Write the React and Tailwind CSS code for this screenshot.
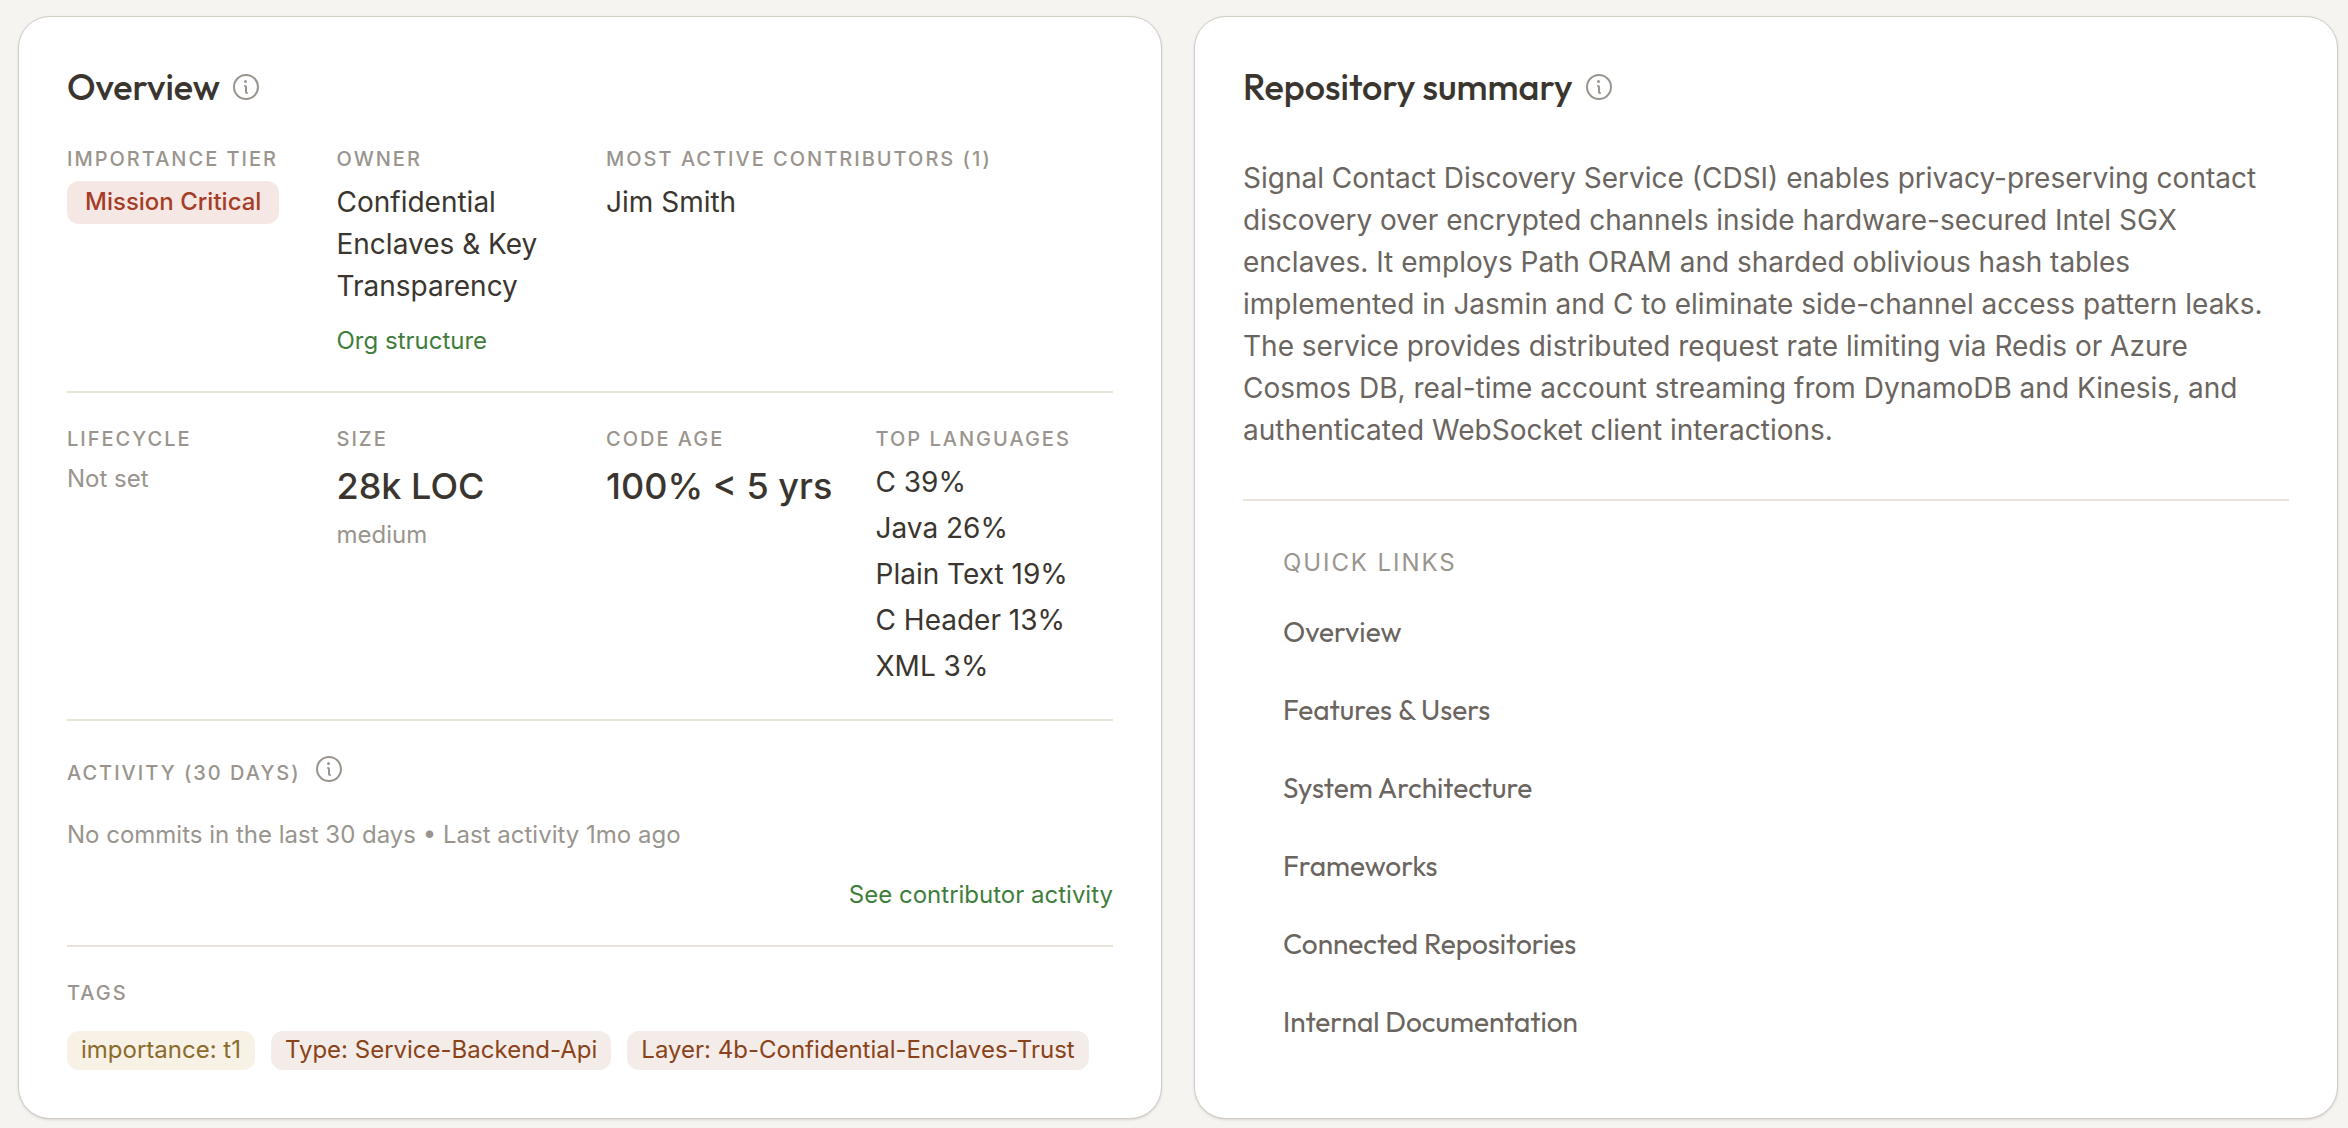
import React from 'react';
import { PiInfo } from 'react-icons/pi';
import clsx from 'clsx';

const languages = ['C 39%', 'Java 26%', 'Plain Text 19%', 'C Header 13%', 'XML 3%'];

const tags = [
  { label: 'importance: t1', tone: 'gold' },
  { label: 'Type: Service-Backend-Api', tone: 'rust' },
  { label: 'Layer: 4b-Confidential-Enclaves-Trust', tone: 'rust' },
];

const quickLinks = [
  { label: 'Overview', href: '#overview' },
  { label: 'Features & Users', href: '#features' },
  { label: 'System Architecture', href: '#architecture' },
  { label: 'Frameworks', href: '#frameworks' },
  { label: 'Connected Repositories', href: '#repositories' },
  { label: 'Internal Documentation', href: '#documentation' },
];

const InfoButton = ({ label }) => (
  <button type="button" aria-label={label} className="shrink-0 text-[#99958e] cursor-pointer">
    <PiInfo className="h-8 w-8" />
  </button>
);

const Card = ({ title, children }) => (
  <section className="flex min-w-0 flex-col rounded-[32px] border border-[#d2cdc5] bg-white p-12 shadow-sm">
    <div className="flex h-11 items-center gap-2.5">
      <h2 className="font-['Outfit','Lato',sans-serif] text-[36px] leading-[44px] font-medium text-[#3a362f]">{title}</h2>
      <InfoButton label={`About ${title}`} />
    </div>
    {children}
  </section>
);

const Label = ({ children }) => (
  <h3 className="text-[20px] leading-8 font-medium tracking-widest text-[#99958e] uppercase">{children}</h3>
);

const Field = ({ label, className, children }) => (
  <div className={clsx('flex min-w-0 flex-col items-start gap-1.5', className)}>
    <Label>{label}</Label>
    {children}
  </div>
);

const Overview = () => (
  <Card title="Overview">
    {/* Ownership */}
    <div className="mt-[34px] grid grid-cols-4 gap-8 border-b-2 border-[#e8e4da] pb-8">
      <Field label="Importance tier">
        <span className="rounded-xl bg-[#f5e7e4] px-[18px] pt-[3px] pb-1 text-2xl leading-9 font-medium whitespace-nowrap text-[#a63d27]">
          Mission Critical
        </span>
      </Field>
      <Field label="Owner">
        <p className="text-[28px] leading-[42px]">Confidential Enclaves &amp; Key Transparency</p>
        <a href="#org" className="mt-2.5 text-2xl leading-9 text-[#3f7d3d]">
          Org structure
        </a>
      </Field>
      <Field label="Most active contributors (1)" className="col-span-2">
        <p className="text-[28px] leading-[42px]">Jim Smith</p>
      </Field>
    </div>

    {/* Code stats */}
    <div className="grid grid-cols-4 gap-8 border-b-2 border-[#e8e4da] pt-[30px] pb-8">
      <Field label="Lifecycle">
        <p className="text-2xl leading-9 text-[#99958e]">Not set</p>
      </Field>
      <Field label="Size">
        <p className="text-[36px] leading-[50px] font-medium">28k LOC</p>
        <p className="text-2xl leading-9 text-[#99958e]">medium</p>
      </Field>
      <Field label="Code age">
        <p className="text-[36px] leading-[50px] font-medium whitespace-nowrap">100% &lt; 5 yrs</p>
      </Field>
      <Field label="Top languages">
        <ul className="flex flex-col gap-1 text-[28px] leading-[42px]">
          {languages.map((language) => (
            <li key={language}>{language}</li>
          ))}
        </ul>
      </Field>
    </div>

    {/* Activity */}
    <div className="flex flex-col border-b-2 border-[#e8e4da] pt-8 pb-8 text-2xl leading-9">
      <div className="flex h-9 items-end gap-3">
        <Label>Activity (30 days)</Label>
        <div className="flex pb-1">
          <InfoButton label="About activity" />
        </div>
      </div>
      <p className="mt-7 text-[#99958e]">No commits in the last 30 days • Last activity 1mo ago</p>
      <a href="#activity" className="mt-6 self-end text-[#3f7d3d]">
        See contributor activity
      </a>
    </div>

    {/* Tags */}
    <div className="flex flex-col gap-[22px] pt-[30px]">
      <Label>Tags</Label>
      <ul className="flex flex-wrap gap-4 text-2xl leading-9">
        {tags.map((tag) => (
          <li
            key={tag.label}
            className={clsx(
              'rounded-xl px-3.5 pt-px pb-0.5',
              tag.tone === 'gold' ? 'bg-[#f8f1e5] text-[#8b6b2c]' : 'bg-[#f4ece9] text-[#8a4319]'
            )}
          >
            {tag.label}
          </li>
        ))}
      </ul>
    </div>
  </Card>
);

const RepositorySummary = () => (
  <Card title="Repository summary">
    <p className="mt-12 border-b-2 border-[#e8e4da] pb-12 text-[28px] leading-[42px] text-[#6b655f]">
      Signal Contact Discovery Service (CDSI) enables privacy-preserving contact discovery over encrypted channels
      inside hardware-secured Intel SGX enclaves. It employs Path ORAM and sharded oblivious hash tables implemented
      in Jasmin and C to eliminate side-channel access pattern leaks. The service provides distributed request rate
      limiting via Redis or Azure Cosmos DB, real-time account streaming from DynamoDB and Kinesis, and authenticated
      WebSocket client interactions.
    </p>
    <nav aria-label="Quick links" className="px-10 pt-11">
      <h3 className="text-2xl leading-9 tracking-[0.08em] text-[#99958e] uppercase">Quick links</h3>
      <ul className="mt-[30px] flex flex-col gap-9 font-['Outfit','Lato',sans-serif] text-[28px] leading-[42px] text-[#6b655f]">
        {quickLinks.map((link) => (
          <li key={link.label}>
            <a href={link.href}>{link.label}</a>
          </li>
        ))}
      </ul>
    </nav>
  </Card>
);

const App = () => (
  <main className="min-h-screen bg-[#f5f4f0] pt-4 pr-2.5 pb-2 pl-[18px] font-['Inter',sans-serif] text-[#3a362f]">
    <div className="grid grid-cols-2 gap-8">
      <Overview />
      <RepositorySummary />
    </div>
  </main>
);

export default App;
